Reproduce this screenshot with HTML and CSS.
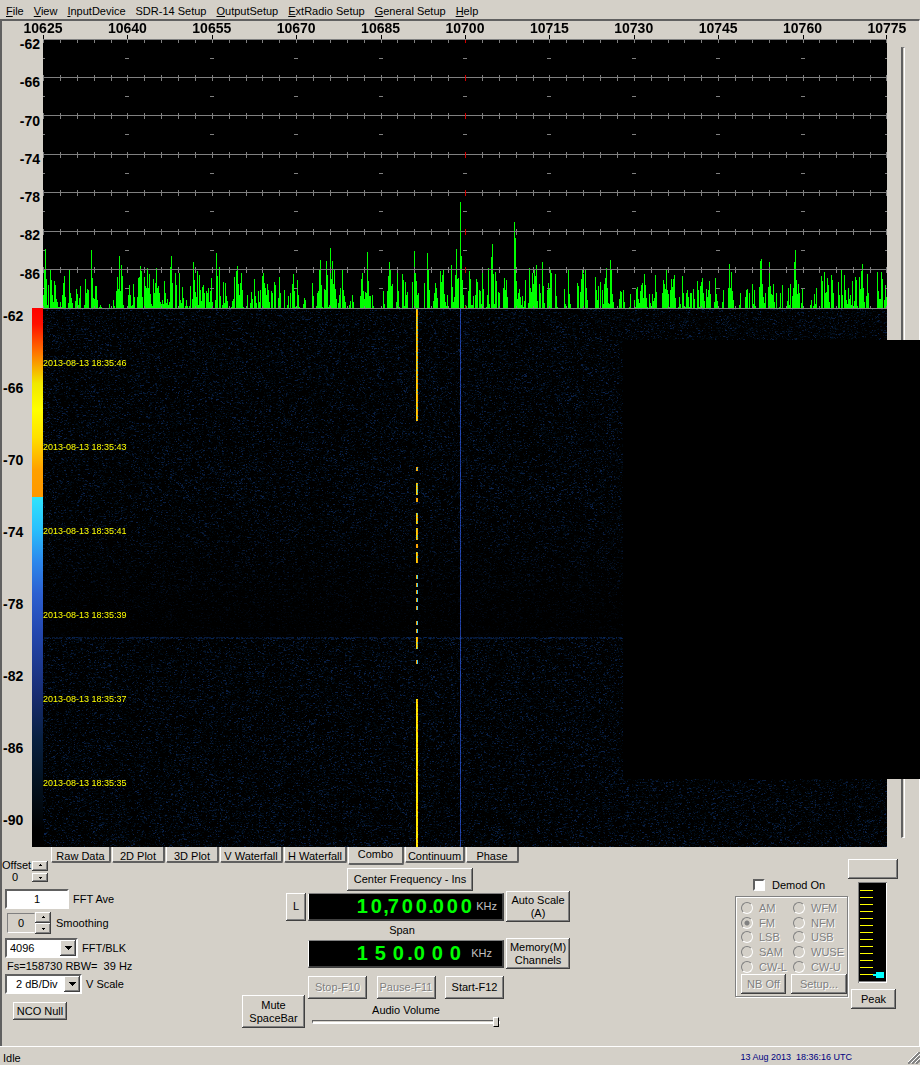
FILE: index.html
```html
<!DOCTYPE html>
<html lang="en">
<head>
<meta charset="utf-8">
<title>Spectrum receiver</title>
<link rel="stylesheet" href="styles.css">
</head>
<body>
<nav class="menu">
  <button><u>F</u>ile</button>
  <button><u>V</u>iew</button>
  <button><u>I</u>nputDevice</button>
  <button>SDR-14 Setup</button>
  <button><u>O</u>utputSetup</button>
  <button><u>E</u>xtRadio Setup</button>
  <button><u>G</u>eneral Setup</button>
  <button><u>H</u>elp</button>
</nav>

<main class="frame">
  <section class="display">
    <div class="level-axis">
      <span>-62</span><span>-66</span><span>-70</span><span>-74</span><span>-78</span><span>-82</span><span>-86</span>
    </div>
    <div class="spectrum">
      <div class="freq-axis">
        <span>10625</span><span>10640</span><span>10655</span><span>10670</span><span>10685</span><span>10700</span><span>10715</span><span>10730</span><span>10745</span><span>10760</span><span>10775</span>
      </div>
      <svg class="trace" viewBox="0 0 844 274" preserveAspectRatio="none" shape-rendering="crispEdges" role="img" aria-label="Spectrum">
        <rect x="0" y="4" width="844" height="270" fill="#000"/>
        <path id="axis-ticks" stroke="#000" fill="none"/>
        <path id="bars" stroke="#0f0" fill="none"/>
        <path id="grid" stroke="#808080" fill="none"/>
        <path id="center-ticks" stroke="#d00000" fill="none"/>
      </svg>
    </div>
    <div class="scroll-groove"></div>
    <div class="color-axis">
      <div class="color-labels">
        <span>-62</span><span>-66</span><span>-70</span><span>-74</span><span>-78</span><span>-82</span><span>-86</span><span>-90</span>
      </div>
      <div class="color-bar"></div>
    </div>
    <div class="waterfall">
      <canvas id="waterfall" width="844" height="539"></canvas>
      <div class="stamps">
        <span>2013-08-13 18:35:46</span><span>2013-08-13 18:35:43</span><span>2013-08-13 18:35:41</span><span>2013-08-13 18:35:39</span><span>2013-08-13 18:35:37</span><span>2013-08-13 18:35:35</span>
      </div>
      <div class="mask"></div>
    </div>
  </section>

  <section class="panel">
    <div class="tabs" role="tablist">
      <button class="tab w60" role="tab">Raw Data</button>
      <button class="tab w53" role="tab">2D Plot</button>
      <button class="tab w53" role="tab">3D Plot</button>
      <button class="tab w63" role="tab">V Waterfall</button>
      <button class="tab w63" role="tab">H Waterfall</button>
      <button class="tab selected w56" role="tab" aria-selected="true">Combo</button>
      <button class="tab w60" role="tab">Continuum</button>
      <button class="tab w53" role="tab">Phase</button>
    </div>

    <div class="settings">
      <div class="offset">
        <div class="offset-text"><span>Offset</span><output>0</output></div>
        <div class="spin small">
          <button class="btn" aria-label="Offset up"><svg viewBox="0 0 5 3"><path d="M2 0h1v1h1v1H1V1h1z"/></svg></button>
          <button class="btn" aria-label="Offset down"><svg viewBox="0 0 5 3"><path d="M1 1h3v1H3v1H2V2H1z"/></svg></button>
        </div>
      </div>
      <div class="line"><input id="ave" class="field" type="text" value="1"><label for="ave">FFT Ave</label></div>
      <div class="line smooth">
        <input id="smooth" class="flat" type="text" value="0" readonly>
        <div class="spin">
          <button class="btn" aria-label="Smoothing up"><svg viewBox="0 0 5 3"><path d="M2 0h1v1h1v1H1V1h1z"/></svg></button>
          <button class="btn" aria-label="Smoothing down"><svg viewBox="0 0 5 3"><path d="M1 1h3v1H3v1H2V2H1z"/></svg></button>
        </div>
        <label for="smooth">Smoothing</label>
      </div>
      <div class="line combo">
        <div class="select blk"><select id="blk"><option>4096</option></select><span class="btn arrow"><svg viewBox="0 0 7 4"><path d="M0 0h7v1H6v1H5v1H4v1H3V3H2V2H1V1H0z"/></svg></span></div>
        <label for="blk">FFT/BLK</label>
      </div>
      <p class="rate">Fs=158730 RBW=&nbsp; 39 Hz</p>
      <div class="line">
        <div class="select scale"><select id="scale"><option>2 dB/Div</option></select><span class="btn arrow"><svg viewBox="0 0 7 4"><path d="M0 0h7v1H6v1H5v1H4v1H3V3H2V2H1V1H0z"/></svg></span></div>
        <label for="scale">V Scale</label>
      </div>
      <button class="btn nco">NCO Null</button>
    </div>

    <div class="tuning">
      <button class="btn center-btn">Center Frequency - Ins</button>
      <button class="btn lock">L</button>
      <div class="lcd"><div class="digits"><b>1</b><b>0</b><i>,</i><b>7</b><b>0</b><b>0</b><i>.</i><b>0</b><b>0</b><b>0</b></div><span>KHz</span></div>
      <button class="btn side">Auto Scale<br>(A)</button>
      <span class="span-label">Span</span>
      <div class="lcd span-lcd"><div class="digits wide"><b>1</b><b>5</b><b>0</b><i>.</i><b>0</b><b>0</b><b>0</b></div><span>KHz</span></div>
      <button class="btn side memory">Memory(M)<br>Channels</button>
      <div class="run">
        <button class="btn" disabled>Stop-F10</button>
        <button class="btn" disabled>Pause-F11</button>
        <button class="btn">Start-F12</button>
      </div>
      <button class="btn mute">Mute<br>SpaceBar</button>
      <div class="volume">
        <label for="volume">Audio Volume</label>
        <input id="volume" type="range" min="0" max="100" value="100">
      </div>
    </div>

    <div class="receive">
      <div class="demod">
        <label class="demod-on"><input type="checkbox">Demod On</label>
        <fieldset disabled>
          <div class="modes">
            <label><input type="radio" name="mode">AM</label><label><input type="radio" name="mode">WFM</label>
            <label><input type="radio" name="mode" checked>FM</label><label><input type="radio" name="mode">NFM</label>
            <label><input type="radio" name="mode">LSB</label><label><input type="radio" name="mode">USB</label>
            <label><input type="radio" name="mode">SAM</label><label><input type="radio" name="mode">WUSE</label>
            <label><input type="radio" name="mode">CW-L</label><label><input type="radio" name="mode">CW-U</label>
          </div>
          <div class="demod-buttons"><button class="btn">NB Off</button><button class="btn">Setup...</button></div>
        </fieldset>
      </div>
      <div class="level">
        <button class="btn blank" aria-label="Level"></button>
        <svg class="meter" viewBox="0 0 29 101" shape-rendering="crispEdges" role="img" aria-label="Level meter">
          <path fill="#808080" d="M0 0h29v101H0z"/><path fill="#fff" d="M28 1h1v100H1v-1h27z"/><path fill="#000" d="M1 1h27v98H1z"/>
          <path id="meter-marks" stroke="#ff0" fill="none"/>
          <path fill="#0ff" d="M15 92h3v-2h8v6h-8v-2h-3z"/>
        </svg>
        <button class="btn peak">Peak</button>
      </div>
    </div>
  </section>
</main>

<footer class="status">
  <span>Idle</span>
  <time>13 Aug 2013&nbsp; 18:36:16 UTC</time>
  <svg class="grip" viewBox="0 0 12 12"><path d="M0 12 12 0M4 12l8-8M8 12l4-4" stroke="#808080" stroke-width="2"/><path d="M-1 11 11-1M3 11l9-9M7 11l5-5" stroke="#fff"/></svg>
</footer>
<script src="plot.js"></script>
</body>
</html>
```
FILE: styles.css
```css
* { box-sizing: border-box; }
body {
  margin: 0;
  min-height: 100vh;
  display: flex;
  flex-direction: column;
  overflow-x: hidden;
  background: #d4d0c8;
  color: #000;
  font: 11px/14px "Liberation Sans", Arial, sans-serif;
}
button, input, select { font: inherit; color: inherit; margin: 0; padding: 0; border-radius: 0; }
p { margin: 0; }

.menu { display: flex; gap: 10px; height: 19px; padding: 4px 6px 0; }
.menu button { border: 0; background: none; line-height: 14px; height: 14px; }

.frame {
  flex: 1;
  border: 2px solid;
  border-color: #606060 #fff #fff #606060;
  border-bottom-width: 0;
  border-right-width: 1px;
  padding-right: 1px;
}
.display { display: grid; grid-template-columns: 41px minmax(0, 1fr) 31px; }
.level-axis, .freq-axis, .color-labels { font-weight: bold; font-size: 14px; }
.level-axis { display: flex; flex-direction: column; padding: 14px 3px 5px 0; text-align: right; line-height: 18px; }
.level-axis span { flex: 1 0 0; }
.spectrum { min-width: 0; height: 287px; position: relative; z-index: 1; }
.freq-axis { display: flex; margin: 0 -5%; line-height: 14px; }
.freq-axis span { flex: 1 1 0; text-align: center; }
.trace { display: block; width: 100%; height: 274px; }
.scroll-groove {
  grid-column: 3;
  grid-row: 1 / 3;
  width: 4px;
  margin: 26px 0 9px 14px;
  border: solid;
  border-width: 1px 1px 1px 2px;
  border-color: #808080 #fff #fff #606060;
}
.color-axis { display: flex; justify-content: space-between; height: 539px; }
.color-labels { display: flex; flex-direction: column; line-height: 16px; padding-left: 1px; }
.color-labels span { flex: 0 0 72px; }
.color-labels span:last-child { flex-basis: 16px; }
.color-bar {
  width: 11px;
  background: linear-gradient(#f00 0, #ff1000 3%, #ff7000 8%, #f0e800 14%, #ff0 19%, #ffe000 24%, #ffa000 30%, #ff9800 35%, #30e4fc 35%, #28c0fc 41%, #2c88ec 47%, #2c60d0 53%, #2448b0 60%, #182c70 72%, #082040 80%, #041424 87%, #000 97%);
}
.waterfall { position: relative; background: #000; }
.waterfall canvas { display: block; width: 100%; height: 539px; image-rendering: pixelated; }
.stamps { position: absolute; inset: 47px auto auto 0; display: flex; flex-direction: column; gap: 68px; color: #ff0; font-size: 9px; line-height: 16px; }
.mask { position: absolute; top: 32px; right: -33px; width: 297px; height: 439px; background: #000; }

.panel { display: grid; grid-template-columns: 49px 191px 330px minmax(0, 1fr) auto; grid-template-rows: 18px auto; }
.tabs { grid-area: 1 / 2 / 2 / -1; display: flex; gap: 1px; align-items: flex-start; z-index: 1; width: max-content; }
.tab {
  height: 16px;
  line-height: 15px;
  padding-top: 2px;
  border: solid;
  border-width: 0 2px 2px 1px;
  border-color: #fff #606060 #606060 #fff;
  border-radius: 0 0 2px 2px;
  background: #d4d0c8;
  white-space: nowrap;
}
.tab.selected { height: 18px; padding: 0 0 3px; }
.w53 { width: 53px; }
.w56 { width: 56px; }
.w60 { width: 60px; }
.w63 { width: 63px; }

.btn {
  border: 0;
  background: #d4d0c8;
  box-shadow: inset -1px -1px #404040, inset 1px 1px #fff, inset -2px -2px #808080;
  line-height: 13px;
  white-space: nowrap;
}
.btn:disabled { color: #808080; text-shadow: 1px 1px #fff; }

.settings { grid-area: 1 / 1 / 3 / 3; padding: 12px 0 0 3px; }
.offset { display: flex; height: 24px; margin: 0 0 6px -3px; }
.offset-text { width: 30px; display: flex; flex-direction: column; line-height: 12px; }
.offset-text output { padding-left: 10px; }
.spin { width: 16px; display: flex; flex-direction: column; }
.spin .btn { flex: 1; display: grid; place-items: center; }
.spin svg { width: 5px; height: 3px; }
.spin.small { gap: 2px; padding: 2px 0 1px; }
.line { display: flex; align-items: center; gap: 4px; height: 20px; }
.field { width: 64px; height: 20px; text-align: center; border: 2px solid; border-color: #606060 #fff #fff #606060; background: #fff; }
.smooth { height: 22px; margin: 3px 0 4px; padding-left: 2px; gap: 0; }
.smooth label { padding-left: 5px; }
.smooth .spin { height: 22px; }
.flat { width: 28px; height: 20px; text-align: center; border: 1px solid; border-color: #808080 #d4d0c8 #fff #808080; background: none; }
.select { position: relative; height: 20px; border: 2px solid; border-color: #606060 #fff #fff #606060; background: #fff; }
.select select { appearance: none; width: 100%; height: 16px; border: 0; background: none; padding-left: 3px; }
.scale select { padding-left: 9px; }
.blk { width: 73px; }
.scale { width: 77px; }
.arrow { position: absolute; top: 0; right: 0; width: 16px; height: 16px; display: grid; place-items: center; pointer-events: none; }
.arrow svg { width: 7px; height: 4px; }
.rate { line-height: 16px; padding-left: 2px; white-space: pre; }
.nco { display: block; width: 54px; height: 18px; margin: 8px 0 0 8px; }

.tuning {
  grid-area: 2 / 3;
  display: grid;
  grid-template-columns: 64px 196px 64px;
  column-gap: 2px;
  grid-template-rows: 26px 31px 16px 31px 37px 22px;
}
.center-btn { grid-area: 1 / 2; justify-self: end; width: 126px; height: 23px; margin: 3px 31px 0 0; }
.lock { grid-area: 2 / 1; justify-self: end; width: 20px; height: 28px; align-self: center; }
.lcd {
  grid-area: 2 / 2;
  align-self: center;
  height: 28px;
  display: flex;
  align-items: center;
  justify-content: flex-end;
  gap: 3px;
  padding-right: 5px;
  background: #000;
  border: solid;
  border-width: 1px 2px 2px 1px;
  border-color: #808080 #404040 #404040 #fff;
  color: #c0c0c0;
}
.digits { display: flex; color: #0f0; font: bold 20px/24px "Liberation Sans", sans-serif; }
.digits b { width: 14px; text-align: center; }
.digits i { width: 3px; font-style: normal; }
.wide b { width: 18px; }
.span-lcd { grid-area: 4 / 2; padding-right: 10px; gap: 7px; }
.span-label { grid-area: 3 / 2; text-align: center; line-height: 16px; padding-right: 8px; }
.side { grid-area: 2 / 3; }
.memory { grid-area: 4 / 3; }
.run { grid-area: 5 / 2; display: flex; justify-content: space-between; align-items: flex-start; padding-top: 7px; }
.run .btn { width: 59px; height: 23px; }
.mute { grid-area: 5 / 1 / 7 / 2; align-self: end; width: 63px; height: 33px; }
.volume { grid-area: 5 / 2 / 7 / 3; align-self: end; display: flex; flex-direction: column; align-items: center; height: 24px; }
.volume label { line-height: 12px; }
.volume input { appearance: none; width: 188px; height: 12px; background: none; }
.volume input::-webkit-slider-runnable-track { height: 4px; border: 1px solid; border-color: #606060 #fff #fff #606060; border-bottom-width: 2px; }
.volume input::-webkit-slider-thumb { appearance: none; width: 6px; height: 10px; margin-top: -4px; background: #d4d0c8; border: 1px solid; border-color: #fff #000 #000 #fff; }

.receive { grid-area: 1 / 5 / 3 / 6; display: flex; padding-right: 20px; }
.demod { width: 113px; padding-top: 30px; }
.demod-on { display: flex; align-items: center; gap: 7px; height: 16px; padding-left: 18px; }
.demod-on input { appearance: none; width: 12px; height: 12px; background: #fff; border: 2px solid; border-color: #606060 #fff #fff #606060; }
fieldset { margin: 3px 0 0; padding: 4px 0 2px 5px; min-width: 0; border: 1px solid #808080; box-shadow: inset 1px 1px #fff, 1px 1px #fff; color: #808080; text-shadow: 1px 1px #fff; }
.modes { display: grid; grid-template-columns: 52px 1fr; grid-auto-rows: minmax(0, 1fr); height: 73px; }
.modes label { display: flex; align-items: center; gap: 6px; line-height: 12px; }
.modes input { appearance: none; width: 12px; height: 12px; border: 1px solid; border-color: #808080 #fff #fff #808080; border-radius: 50%; }
.modes input:checked { background: radial-gradient(#808080 2px, transparent 3px); }
.demod-buttons { display: flex; justify-content: space-between; }
.demod-buttons .btn { height: 20px; width: 56px; }
.demod-buttons .btn:first-child { width: 45px; }
.level { width: 50px; display: flex; flex-direction: column; align-items: flex-start; padding-top: 12px; }
.blank { width: 50px; height: 20px; }
.meter { width: 29px; height: 101px; margin: 3px 0 6px 10px; }
.peak { width: 45px; height: 20px; margin-left: 3px; }

.status { display: flex; align-items: center; height: 19px; border-top: 1px solid #fff; padding: 3px 0 0 3px; position: relative; }
.status time { margin: 0 68px 2px auto; color: #000080; font-size: 9px; line-height: 12px; }
.grip { position: absolute; right: 0; bottom: 1px; width: 12px; height: 12px; }
```
FILE: plot.js
```js
// Bin position : height in pixels above the noise floor.
const PEAKS = `1:39 2:59 3:29 5:23 7:38 8:28 9:13 11:27 12:23 14:6 17:6 20:25 21:32 26:39 27:15 28:10 33:19 34:14 37:22 42:29 43:15 44:19 45:18 48:58 49:30 52:22 53:22 57:3 66:4 70:8 73:17 74:31 76:52 77:17 78:43 79:32 86:23 87:13 90:24 91:11 95:30 96:31 97:42 98:37 101:31 102:22 103:20 104:40 105:20 106:34 107:14 110:29 111:15 112:25 113:40 114:20 115:22 116:15 119:8 121:27 122:15 124:9 127:41 128:52 132:35 133:23 136:35 139:21 140:10 143:8 147:22 150:46 151:28 154:37 156:33 157:18 159:21 160:23 161:15 163:17 164:15 165:20 168:30 173:55 174:32 176:41 177:12 180:26 182:25 183:12 189:7 191:31 193:37 194:42 195:24 197:25 198:35 199:18 204:13 208:16 211:29 212:12 215:17 217:18 219:32 220:35 221:25 222:20 224:24 225:18 228:17 229:15 231:26 232:23 236:31 241:18 245:12 247:15 249:24 250:34 251:17 254:28 255:13
261:10 262:8 269:25 270:12 274:15 275:17 276:38 277:48 278:23 281:19 283:47 284:33 287:60 288:29 289:47 290:24 291:39 292:19 296:13 297:20 299:39 300:18 301:12 307:7 309:13 318:29 319:35 320:17 322:16 324:56 325:27 327:12 329:13 340:17 345:32 346:46 347:39 348:22 349:24 354:38 355:17 359:34 360:28 362:26 364:16 369:26 371:57 372:35 373:27 374:13 375:15 381:25 384:55 385:39 391:15 392:25 393:20 397:37 398:26 399:33 400:39 401:14 404:13 408:43 409:21 412:33 413:59 414:29 415:30 417:106 418:52 419:28 420:13 422:3 426:37 427:29 430:12 432:13 433:29 434:26 436:18 437:17 439:40 440:19 444:13 445:40 448:51 449:64 450:34 452:36 453:27 455:16 456:15 460:20 461:30 462:18 463:28 471:86 472:70 473:27 475:15 476:19 479:12 482:28 486:40 487:20 489:35 490:24 491:39 492:32 493:43 496:24 497:15 499:46 500:22 504:18 505:25 506:20 507:38 508:35 512:34 513:12 521:19 525:39 526:14 534:25 535:22 538:29 539:39 540:34 542:39 543:20 552:31 553:18 555:22 557:26 559:18 561:24 562:30 563:40 564:20
567:48 568:38 569:14 577:17 578:16 580:18 587:14 591:8 593:19 594:21 597:17 598:23 599:25 601:34 602:23 603:10 606:14 609:14 611:10 612:33 613:16 620:28 621:24 622:19 623:38 624:18 625:14 627:18 628:29 629:21 630:29 631:33 636:11 639:32 640:15 643:15 644:18 647:15 648:15 650:19 651:9 654:27 655:18 657:22 658:26 659:30 660:15 663:19 665:18 666:27 667:14 672:30 673:14 680:18 685:20 686:44 687:20 688:36 689:17 697:15 703:18 704:19 706:15 709:24 711:18 717:47 718:49 719:24 722:15 726:46 727:22 728:14 730:24 733:15 737:15 739:23 745:20 747:24 750:20 751:46 752:58 753:28 755:24 756:15 759:19 768:8 771:14 773:20 778:32 779:27 781:36 782:15 784:30 785:23 788:33 789:28 795:26 796:13 798:38 799:13 801:33 802:18 805:20 807:13 809:27 812:31 813:28 816:31 817:19 818:37 819:44 820:20 824:34 825:15 834:36 835:17 838:36 839:29 842:23 843:11`;

let seed = 14;
function random() {
  seed = (seed * 1664525 + 1013904223) >>> 0;
  return seed / 4294967296;
}

const WIDTH = 844;
const FLOOR = 273;
const TOP = 4;
const heights = new Array(WIDTH).fill(0);
PEAKS.split(/\s+/).forEach(p => {
  const [x, h] = p.split(":").map(Number);
  heights[x] = h;
});
const bars = heights.map((h, x) => {
  if (!h) {
    const near = Math.max(heights[x - 1] || 0, heights[x + 1] || 0);
    h = near && random() < 0.65 ? Math.round(near * random() * 0.6) : 0;
  }
  return h ? `M${x + 0.5} ${FLOOR}v${-h}` : "";
}).join("");

let grid = "", center = "", ticks = "";
for (let row = 0; row <= 7; row++) {
  const y = Math.floor(TOP + row * (FLOOR - TOP) / 7) + 0.5;
  grid += `M0 ${y}H${WIDTH}`;
  for (let i = 0; i <= 50; i++) {
    const x = Math.min(Math.round(i * WIDTH / 50), WIDTH - 1) + 0.5;
    const from = row === 0 ? y : y - 3;
    const mark = `M${x} ${from}V${Math.min(y + 3, FLOOR)}`;
    if (i === 25) center += mark; else grid += mark;
  }
  if (row < 7) {
    for (let i = 0; i <= 10; i++) grid += `M${Math.round(i * WIDTH / 10) - 2} ${y + 19}h4`;
  }
}
for (let i = 0; i <= 10; i++) ticks += `M${Math.min(Math.round(i * WIDTH / 10), WIDTH - 1) + 0.5} 0v4`;
document.getElementById("bars").setAttribute("d", bars);
document.getElementById("grid").setAttribute("d", grid);
document.getElementById("center-ticks").setAttribute("d", center);
document.getElementById("axis-ticks").setAttribute("d", ticks);

let marks = "";
for (let i = 0; i < 13; i++) marks += `M2 ${8.5 + i * 7}h13`;
document.getElementById("meter-marks").setAttribute("d", marks);

// Waterfall: background noise, one keyed carrier and the centre line.
const ctx = document.getElementById("waterfall").getContext("2d");
ctx.fillStyle = "#000";
ctx.fillRect(0, 0, WIDTH, 539);
for (let y = 0; y < 539; y++) {
  const fade = y > 200 && y < 329 ? 1 - (y - 200) / 160 : 1;
  const sweep = y === 329 || y === 330;
  for (let x = 0; x < WIDTH; x++) {
    if (random() > (sweep && x < 580 ? 0.6 : 0.22)) continue;
    const v = random() ** 3;
    ctx.fillStyle = sweep
      ? `rgb(6,${20 + v * 20 | 0},${44 + v * 50 | 0})`
      : `rgb(${v * 12 * fade | 0},${(8 + v * 28) * fade | 0},${(14 + v * 66) * fade | 0})`;
    ctx.fillRect(x, y, random() < 0.3 ? 2 : 1, 1);
  }
}
const KEYED = [[0, 113], [159, 163], [175, 187], [190, 194], [205, 216], [220, 232], [236, 240], [244, 255], [267, 271], [275, 279], [282, 286], [290, 294], [298, 302], [313, 317], [321, 325], [329, 341], [352, 356], [391, 539]];
KEYED.forEach(([from, to]) => {
  const solid = from > 380;
  const short = to - from < 5;
  for (let y = from; y < to; y++) {
    const r = random();
    ctx.fillStyle = solid ? "#ffe800" : short ? (r < 0.5 ? "#ffb000" : "#ffa010") : "#ffd000";
    ctx.fillRect(373, y, 1, 1);
    ctx.fillStyle = solid ? (r < 0.8 ? "#ffe800" : "#ffa000") : short && from > 260 ? "#40c8f0" : r < 0.65 ? "#ffa800" : "#60c8b0";
    ctx.fillRect(374, y, 1, 1);
  }
});
for (let y = 0; y < 539; y++) {
  ctx.fillStyle = random() < 0.5 ? "#2448b0" : "#1c3894";
  ctx.fillRect(417, y, 1, 1);
}
```
